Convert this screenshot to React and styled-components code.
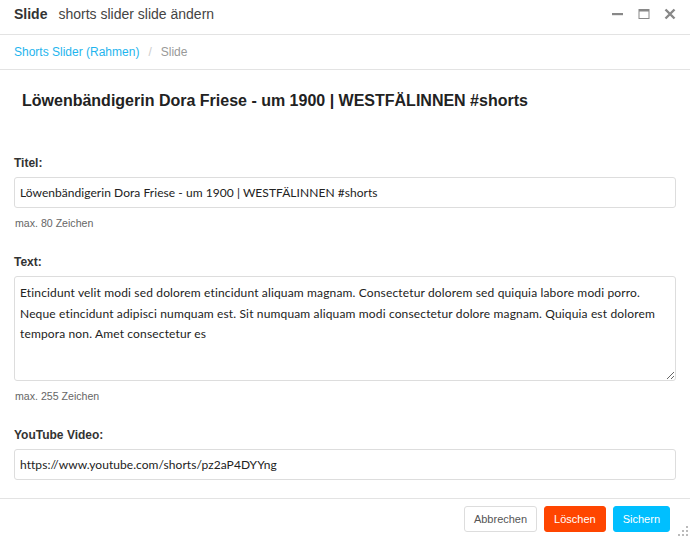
import React from 'react';
import styled, { createGlobalStyle } from 'styled-components';

const Global = createGlobalStyle`
  html, body { margin: 0; padding: 0; background: #fff; }
  body { font-family: "Liberation Sans", Arial, sans-serif; color: #333; }
  * { box-sizing: border-box; }
`;

const Window = styled.div`
  width: 690px;
  height: 538px;
  display: flex;
  flex-direction: column;
  position: relative;
  overflow: hidden;
`;

const TitleBar = styled.div`
  flex-shrink: 0;
  height: 35px;
  display: flex;
  align-items: center;
  padding: 0 14px 6px;
  border-bottom: 1px solid #e3e3e3;
`;

const Title = styled.span`
  font-size: 14px;
  font-weight: bold;
  color: #333;
  margin-right: 11px;
`;

const SubTitle = styled.span`
  font-size: 14px;
  color: #444;
  flex: 1;
`;

const Controls = styled.div`
  display: flex;
  gap: 14px;
  align-items: center;
`;

const Crumbs = styled.div`
  flex-shrink: 0;
  height: 35px;
  display: flex;
  align-items: center;
  padding: 0 14px;
  font-size: 12px;
  border-bottom: 1px solid #e3e3e3;
`;

const CrumbLink = styled.a`
  color: #1fb5ee;
  text-decoration: none;
`;

const Sep = styled.span`
  color: #ccc;
  margin: 0 9px;
`;

const CrumbCurrent = styled.span`
  color: #999;
`;

const Body = styled.div`
  flex: 1;
  min-height: 0;
  padding: 22px 14px 0;
`;

const Heading = styled.h1`
  margin: 0 0 46px 8px;
  font-size: 16px;
  font-weight: bold;
  color: #222;
`;

const Field = styled.div`
  margin-bottom: 26px;
  &:last-child { margin-bottom: 0; }
`;

const Label = styled.label`
  display: block;
  font-size: 12px;
  font-weight: bold;
  color: #333;
  margin-bottom: 7px;
`;

const Input = styled.input`
  display: block;
  width: 662px;
  height: 31px;
  border: 1px solid #ddd;
  border-radius: 3px;
  padding: 0 5px;
  font-family: Lato, "Open Sans", sans-serif;
  font-size: 12px;
  letter-spacing: 0.05px;
  color: #222;
  outline: none;
`;

const TextArea = styled.textarea`
  display: block;
  width: 662px;
  height: 105px;
  border: 1px solid #ddd;
  border-radius: 3px;
  padding: 6px 5px;
  font-family: Lato, "Open Sans", sans-serif;
  font-size: 12px;
  letter-spacing: 0.15px;
  line-height: 20.5px;
  color: #222;
  outline: none;
  resize: vertical;
`;

const Hint = styled.div`
  font-size: 10.6px;
  color: #666;
  margin: 9px 0 0 1px;
`;

const Footer = styled.div`
  flex-shrink: 0;
  height: 40px;
  border-top: 1px solid #e3e3e3;
  display: flex;
  justify-content: flex-end;
  align-items: center;
  gap: 7px;
  padding: 0 20px 0 0;
`;

const Button = styled.button`
  height: 26px;
  padding: 0 9px;
  border-radius: 3px;
  font-family: "Liberation Sans", Arial, sans-serif;
  font-size: 11px;
  border: 1px solid ${p => (p.$bg ? p.$bg : '#ddd')};
  background: ${p => p.$bg || '#fff'};
  color: ${p => (p.$bg ? '#fff' : '#555')};
`;

const Grip = styled.div`
  position: absolute;
  right: 2px;
  bottom: 2px;
  display: grid;
  grid-template-columns: repeat(3, 2px);
  gap: 2px;
`;

const Dot = styled.span`
  width: 2px;
  height: 2px;
  background: ${p => (p.$on ? '#bbb' : 'transparent')};
`;

const Icon = ({ children }) => (
  <svg width="12" height="12" viewBox="0 0 12 12">{children}</svg>
);

const bodyText =
  'Etincidunt velit modi sed dolorem etincidunt aliquam magnam. Consectetur dolorem sed quiquia labore modi porro.\n' +
  'Neque etincidunt adipisci numquam est. Sit numquam aliquam modi consectetur dolore magnam. Quiquia est dolorem\n' +
  'tempora non. Amet consectetur es';

export default function App() {
  const dots = [0, 0, 1, 0, 1, 1, 1, 1, 1];
  return (
    <>
      <Global />
      <Window>
        <TitleBar>
          <Title>Slide</Title>
          <SubTitle>shorts slider slide ändern</SubTitle>
          <Controls>
            <Icon>
              <rect x="0" y="5" width="11" height="2.2" fill="#888" />
            </Icon>
            <Icon>
              <rect x="1" y="1.5" width="10" height="9" fill="none" stroke="#888" strokeWidth="1" />
              <rect x="1" y="1.5" width="10" height="2" fill="#888" />
            </Icon>
            <Icon>
              <path d="M1.5 1.5 L10.5 10.5 M10.5 1.5 L1.5 10.5" stroke="#888" strokeWidth="2.4" />
            </Icon>
          </Controls>
        </TitleBar>
        <Crumbs>
          <CrumbLink href="#">Shorts Slider (Rahmen)</CrumbLink>
          <Sep>/</Sep>
          <CrumbCurrent>Slide</CrumbCurrent>
        </Crumbs>
        <Body>
          <Heading>Löwenbändigerin Dora Friese - um 1900 | WESTFÄLINNEN #shorts</Heading>
          <Field>
            <Label>Titel:</Label>
            <Input defaultValue="Löwenbändigerin Dora Friese - um 1900 | WESTFÄLINNEN #shorts" />
            <Hint>max. 80 Zeichen</Hint>
          </Field>
          <Field>
            <Label>Text:</Label>
            <TextArea defaultValue={bodyText} />
            <Hint>max. 255 Zeichen</Hint>
          </Field>
          <Field>
            <Label>YouTube Video:</Label>
            <Input defaultValue="https://www.youtube.com/shorts/pz2aP4DYYng" />
          </Field>
        </Body>
        <Footer>
          <Button>Abbrechen</Button>
          <Button $bg="#ff4500">Löschen</Button>
          <Button $bg="#00bfff">Sichern</Button>
        </Footer>
        <Grip>
          {dots.map((on, i) => (
            <Dot key={i} $on={on} />
          ))}
        </Grip>
      </Window>
    </>
  );
}
